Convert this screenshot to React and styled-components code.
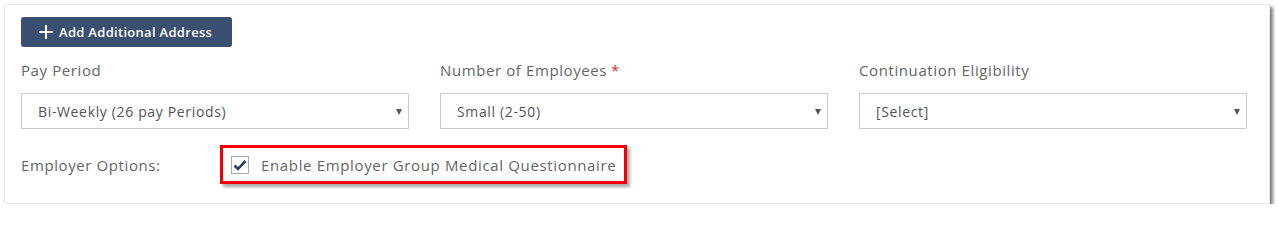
import React, { useState } from "react";
import styled, { createGlobalStyle } from "styled-components";

const GlobalStyle = createGlobalStyle`
  html, body {
    margin: 0;
    padding: 0;
    background: #fff;
    font-family: "Open Sans", "Liberation Sans", sans-serif;
  }
`;

const Panel = styled.div`
  margin: 4px 0 0 4px;
  width: 1266px;
  box-sizing: border-box;
  padding: 12px 22px 19px 16px;
  background: #fff;
  border: 1px solid #e6e6e6;
  box-shadow: 3px 3px 3px rgba(0, 0, 0, 0.5);
`;

const AddButton = styled.button`
  display: inline-flex;
  align-items: center;
  gap: 6px;
  height: 30px;
  width: 211px;
  padding: 0 0 0 18px;
  border: none;
  border-radius: 3px;
  background: #3b5070;
  color: #fff;
  font-family: inherit;
  font-size: 13px;
  font-weight: 600;
  letter-spacing: 0.3px;
  cursor: pointer;
`;

const Grid = styled.div`
  display: grid;
  grid-template-columns: repeat(3, 388px);
  column-gap: 31px;
`;

const Field = styled.div`
  display: flex;
  flex-direction: column;
`;

const Label = styled.label`
  margin: 12px 0;
  font-size: 15px;
  letter-spacing: 0.6px;
  line-height: 22px;
  color: #666;
`;

const Required = styled.span`
  color: #d0312d;
  margin-left: 4px;
`;

const SelectBox = styled.div`
  position: relative;
  height: 36px;
  box-sizing: border-box;
  border: 1px solid #ccc;
  display: flex;
  align-items: center;
  padding-left: 16px;
  font-size: 14px;
  letter-spacing: 0.65px;
  color: #555;
`;

const Arrow = styled.span`
  position: absolute;
  right: 6px;
  top: 15px;
  width: 0;
  height: 0;
  border-left: 3.5px solid transparent;
  border-right: 3.5px solid transparent;
  border-top: 6px solid #555;
`;

const OptionsRow = styled.div`
  display: flex;
  align-items: center;
  margin-top: 16px;
`;

const OptionsLabel = styled.span`
  width: 199px;
  font-size: 15px;
  letter-spacing: 0.6px;
  color: #666;
`;

const Highlight = styled.div`
  display: flex;
  align-items: center;
  gap: 12px;
  height: 39px;
  width: 407px;
  box-sizing: border-box;
  padding-left: 8px;
  border: 3px solid #f20000;
  box-shadow: 3px 3px 3px rgba(0, 0, 0, 0.35);
  font-size: 15px;
  letter-spacing: 0.65px;
  color: #666;
  cursor: pointer;
`;

const CheckBox = styled.span`
  width: 18px;
  height: 18px;
  box-sizing: border-box;
  border: 1px solid #aaa;
  background: #fff;
  display: flex;
  align-items: center;
  justify-content: center;
`;

const Select = ({ value }) => (
  <SelectBox>
    {value}
    <Arrow />
  </SelectBox>
);

export default function App() {
  const [checked, setChecked] = useState(true);
  return (
    <>
      <GlobalStyle />
      <Panel>
        <AddButton>
          <svg width="14" height="14" viewBox="0 0 14 14">
            <path d="M7 0v14M0 7h14" stroke="#fff" strokeWidth="2" />
          </svg>
          Add Additional Address
        </AddButton>
        <Grid>
          <Field>
            <Label>Pay Period</Label>
            <Select value="Bi-Weekly (26 pay Periods)" />
          </Field>
          <Field>
            <Label>
              Number of Employees<Required>*</Required>
            </Label>
            <Select value="Small (2-50)" />
          </Field>
          <Field>
            <Label>Continuation Eligibility</Label>
            <Select value="[Select]" />
          </Field>
        </Grid>
        <OptionsRow>
          <OptionsLabel>Employer Options:</OptionsLabel>
          <Highlight onClick={() => setChecked(!checked)}>
            <CheckBox>
              {checked && (
                <svg width="14" height="12" viewBox="0 0 14 12">
                  <path
                    d="M1.5 6.5 L5 10 L12.5 2"
                    fill="none"
                    stroke="#2c4366"
                    strokeWidth="2.6"
                  />
                </svg>
              )}
            </CheckBox>
            Enable Employer Group Medical Questionnaire
          </Highlight>
        </OptionsRow>
      </Panel>
    </>
  );
}
